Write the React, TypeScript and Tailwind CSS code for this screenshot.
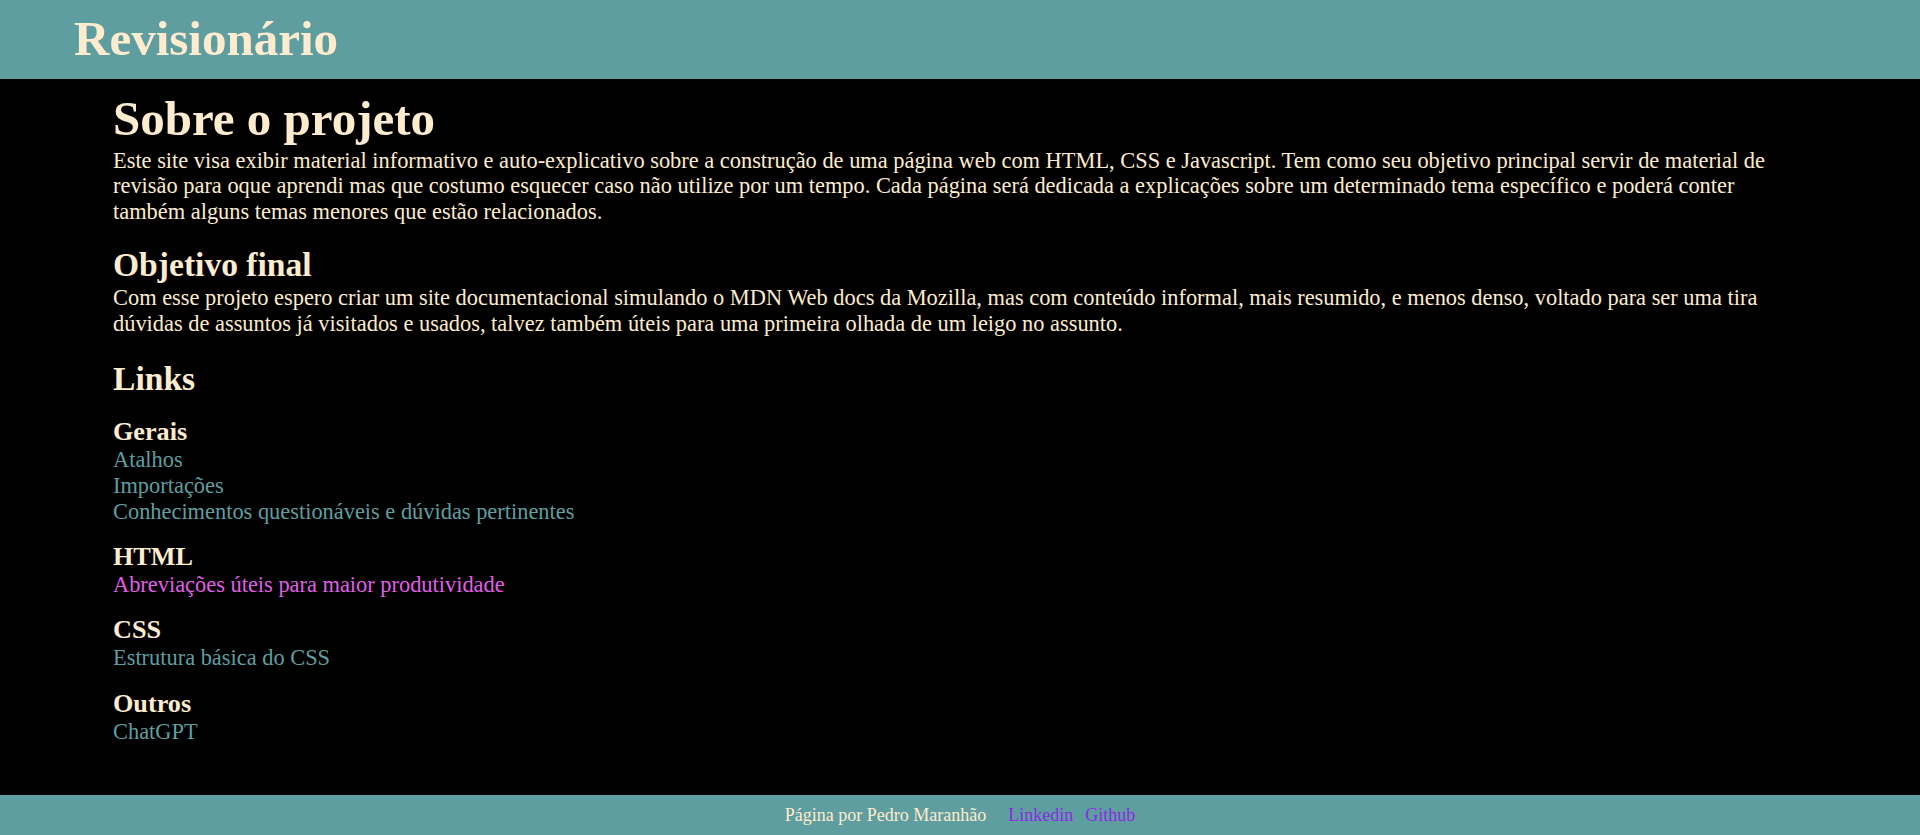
import React from 'react';

type LinkGroup = {
  title: string;
  links: { label: string; visited?: boolean }[];
};

const groups: LinkGroup[] = [
  {
    title: 'Gerais',
    links: [
      { label: 'Atalhos' },
      { label: 'Importações' },
      { label: 'Conhecimentos questionáveis e dúvidas pertinentes' },
    ],
  },
  {
    title: 'HTML',
    links: [{ label: 'Abreviações úteis para maior produtividade', visited: true }],
  },
  {
    title: 'CSS',
    links: [{ label: 'Estrutura básica do CSS' }],
  },
  {
    title: 'Outros',
    links: [{ label: 'ChatGPT' }],
  },
];

const App: React.FC = () => {
  return (
    <div className="min-h-screen flex flex-col bg-black text-[#ffebcd] font-['Liberation_Serif','Times_New_Roman',serif]">
      <header className="h-[79px] bg-[#5f9ea0] pl-[74px]">
        <h1 className="text-[49px] leading-[77px] font-bold">Revisionário</h1>
      </header>

      <main className="flex-1 px-[113px] pb-10">
        <h1 className="mt-[14px] text-[49px] leading-[52px] font-bold">Sobre o projeto</h1>
        <p className="mt-[2.5px] text-[22.4px] leading-[25.76px]">
          Este site visa exibir material informativo e auto-explicativo sobre a construção de uma página web com
          HTML, CSS e Javascript. Tem como seu objetivo principal servir de material de revisão para oque aprendi
          mas que costumo esquecer caso não utilize por um tempo. Cada página será dedicada a explicações sobre um
          determinado tema específico e poderá conter
          <br />
          também alguns temas menores que estão relacionados.
        </p>

        <h2 className="mt-[22.5px] text-[33.6px] leading-[36px] font-bold">Objetivo final</h2>
        <p className="mt-[1.5px] text-[22.4px] leading-[25.76px]">
          Com esse projeto espero criar um site documentacional simulando o MDN Web docs da Mozilla, mas com
          conteúdo informal, mais resumido, e menos denso, voltado para ser uma tira dúvidas de assuntos já
          visitados e usados, talvez também úteis para uma primeira olhada de um leigo no assunto.
        </p>

        <h2 className="mt-[25px] text-[33.6px] leading-[36px] font-bold">Links</h2>
        {groups.map((group, i) => (
          <div key={group.title} className={i === 0 ? 'mt-[20px]' : 'mt-[17.5px]'}>
            <h3 className="text-[26.2px] leading-[30px] font-bold">{group.title}</h3>
            <ul className="text-[22.4px] leading-[25.76px]">
              {group.links.map((link) => (
                <li key={link.label}>
                  <a href="#" className={link.visited ? 'text-[#e05fe6]' : 'text-[#5f9ea0]'}>
                    {link.label}
                  </a>
                </li>
              ))}
            </ul>
          </div>
        ))}
      </main>

      <footer className="h-10 bg-[#5f9ea0] flex items-center justify-center text-[18px]">
        <span>Página por Pedro Maranhão</span>
        <a href="#" className="ml-[22px] text-[#8a2be2]">
          Linkedin
        </a>
        <a href="#" className="ml-[12px] text-[#8a2be2]">
          Github
        </a>
      </footer>
    </div>
  );
};

export default App;
